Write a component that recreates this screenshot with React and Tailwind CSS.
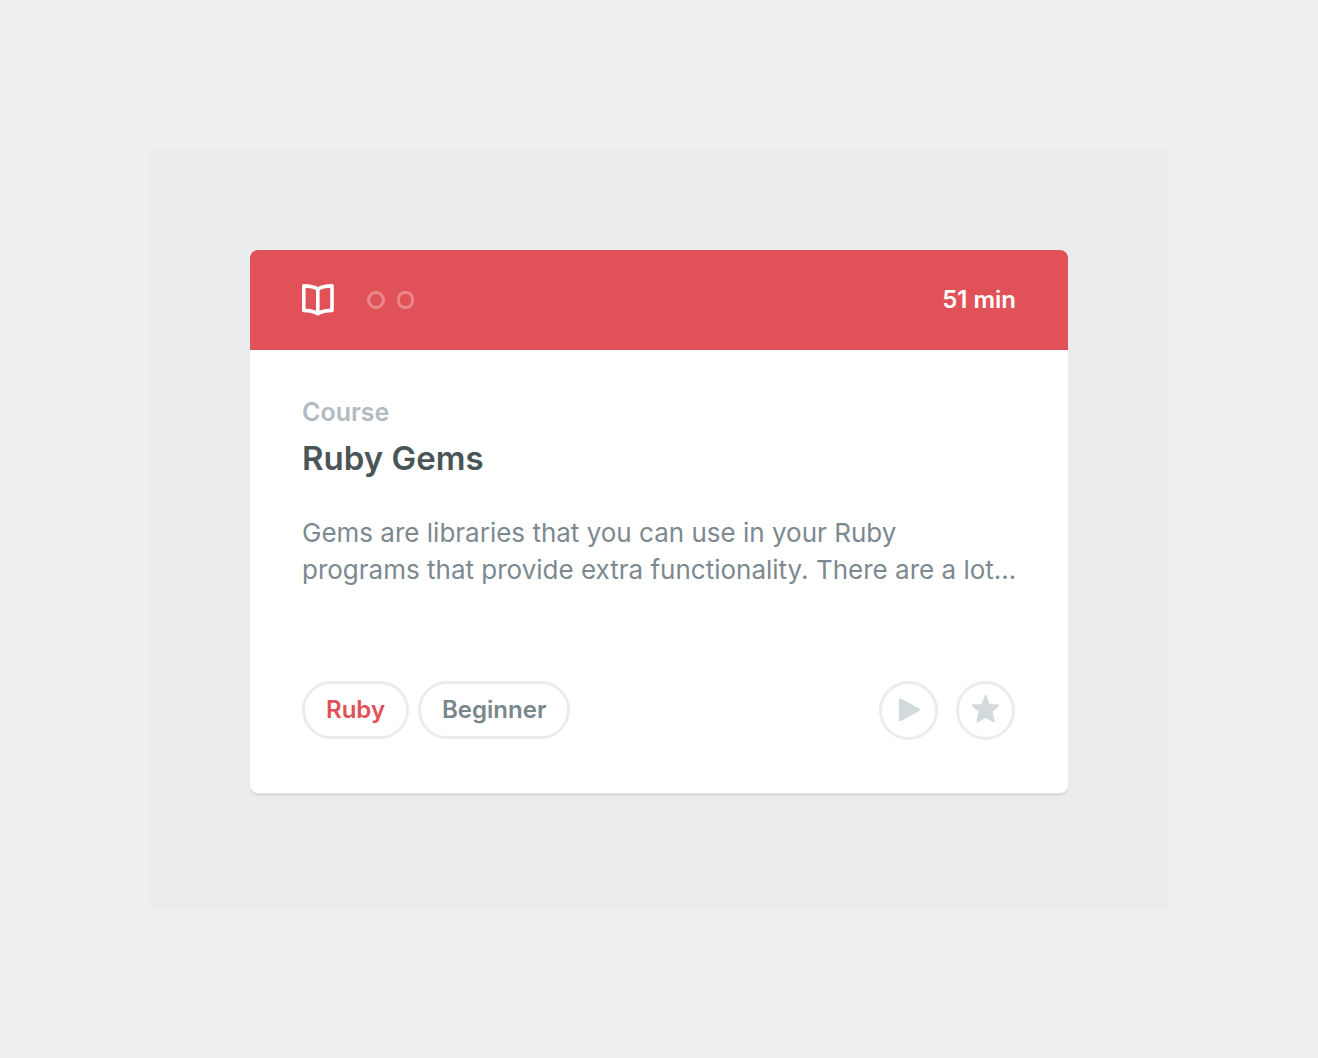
function BookIcon() {
  return (
    <svg className="block" width="32" height="32" viewBox="0 0 32 32" fill="none" stroke="#fff" strokeWidth="3.6" strokeLinejoin="round" strokeLinecap="round" aria-hidden="true">
      <path d="M1.8 1.9C7 2 12.500 3 15.800 5.200C19 3 24.500 2 30 1.900V26.400C24.500 26.500 19.500 27.500 15.800 29.600C12 27.500 7 26.500 1.800 26.400Z" />
      <path d="M15.800 5.500V29" />
    </svg>
  );
}

function Tag({ children, className }) {
  return (
    <a href="#" className={`flex h-[58px] items-center rounded-full border-3 border-[#ebecee] px-[21px] text-2xl font-semibold ${className}`}>
      {children}
    </a>
  );
}

function RoundButton({ label, children }) {
  return (
    <button type="button" aria-label={label} className="flex size-[59px] items-center justify-center rounded-full border-3 border-[#ebecee] text-[#d3dadd]">
      {children}
    </button>
  );
}

export default function App() {
  return (
    <main className="min-h-screen bg-[#eeeff1] p-[150px] font-['Inter',sans-serif]">
      <section className="bg-[#ebecee] px-[100px] pt-[100px] pb-[115px]">
        <article className="rounded-lg bg-white shadow-[0_3px_0_#dcdee0]">
          <header className="flex h-[100px] items-center rounded-t-lg bg-[#e15258] px-[52px] text-white">
            <BookIcon />
            <span className="ml-[33px] size-[18px] rounded-full border-3 border-white/30" />
            <span className="ml-3 h-[18px] w-[17px] rounded-[8px] border-3 border-white/30" />
            <span className="ml-auto text-2xl font-semibold">51 min</span>
          </header>
          <div className="pt-11 pr-[53px] pb-[53px] pl-[52px]">
            <p className="text-[25px] leading-9 font-semibold text-[#b3bac1]">Course</p>
            <h1 className="mt-2 text-[33px] leading-10 font-semibold text-[#4a5557]">Ruby Gems</h1>
            <p className="mt-9 text-[26px] leading-[37px] text-[#7c8990] lg:whitespace-nowrap">
              Gems are libraries that you can use in your Ruby
              <br />
              programs that provide extra functionality. There are a lot...
            </p>
            <footer className="mt-[93px] flex items-start">
              <Tag className="text-[#e15258]">Ruby</Tag>
              <Tag className="ml-[9px] text-[#78878b]">Beginner</Tag>
              <div className="ml-auto flex gap-[18px]">
                <RoundButton label="Play">
                  <svg width="32" height="32" viewBox="0 0 32 32" fill="currentColor" stroke="currentColor" strokeWidth="3" strokeLinejoin="round" aria-hidden="true">
                    <path d="M7.500 5L25.500 14.800L7.500 24.800Z" />
                  </svg>
                </RoundButton>
                <RoundButton label="Favorite">
                  <svg width="32" height="32" viewBox="0 0 32 32" fill="currentColor" stroke="currentColor" strokeWidth="2" strokeLinejoin="round" aria-hidden="true">
                    <path d="M15.500 1L18.600 9.900L28.200 10.300L21.500 16.300L23.800 26.500L15.500 21.700L7.400 26.500L9.600 16.300L2.700 10.300L12.400 9.900Z" />
                  </svg>
                </RoundButton>
              </div>
            </footer>
          </div>
        </article>
      </section>
    </main>
  );
}
